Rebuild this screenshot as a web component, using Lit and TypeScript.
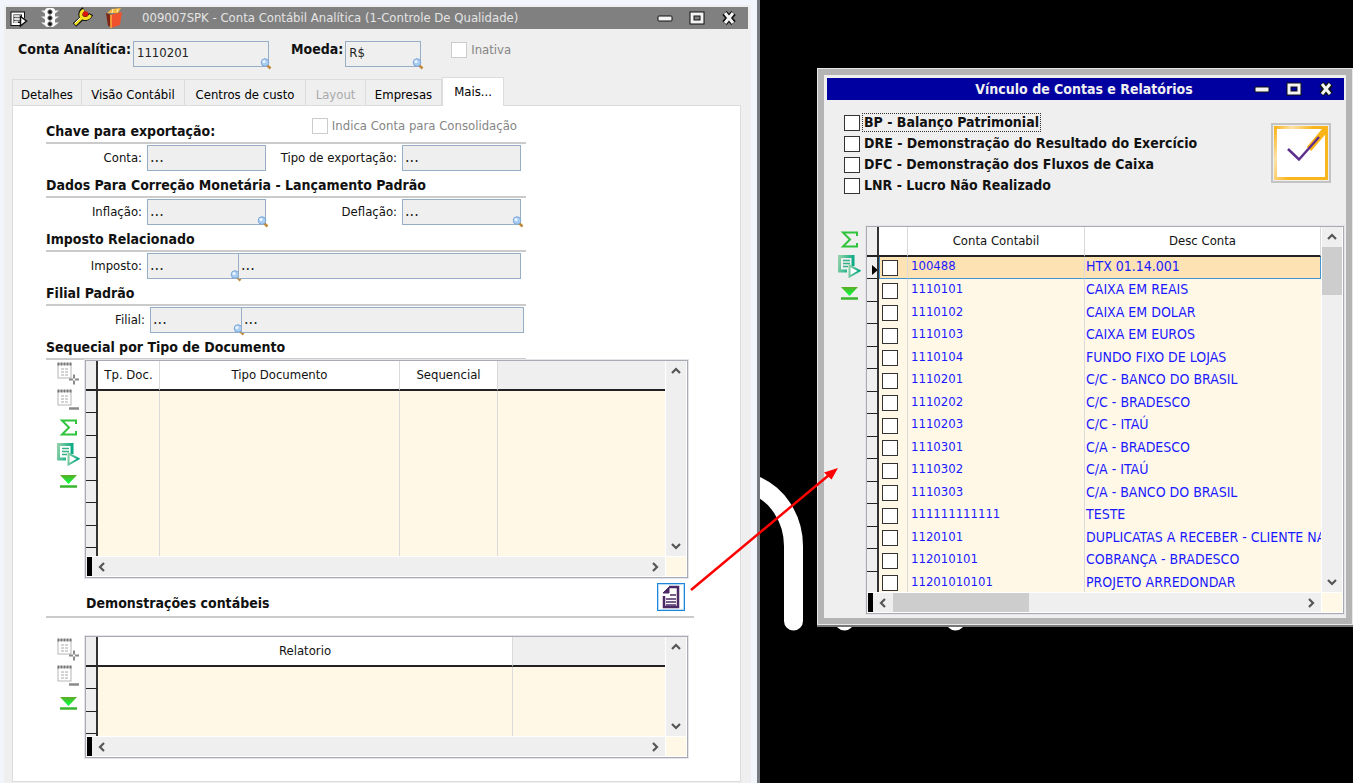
import { LitElement, html, css, svg, nothing } from "lit";
import { customElement, property } from "lit/decorators.js";
import { classMap } from "lit/directives/class-map.js";

const base = css`
  * { box-sizing: border-box; }
  :host { font-family: "DejaVu Sans Condensed", "DejaVu Sans", sans-serif; font-size: 13px; line-height: 16px; color: #111; }
  button { font: inherit; padding: 0; margin: 0; border: 0; background: none; display: grid; place-items: center; }
  svg { display: block; }
  input[type="checkbox"] { appearance: none; width: 16px; height: 16px; margin: 0; flex: none; background: #fff; border: 1px solid #333; display: block; }
  input[type="checkbox"]:checked { background: #0000a0; }
`;

const sheet = svg`
  <rect x="1" y="2" width="13" height="14" fill="#fff" stroke="#b5b5b5"/>
  <path d="M0.500 2h14" stroke="#777" stroke-width="3" stroke-dasharray="2 1"/>
  <path d="M4 7h7M4 10h7M4 13h7" stroke="#a8a8a8" stroke-dasharray="3 1"/>`;

const toolIcons = {
  add: svg`${sheet}<path d="M12 17.500h10M17 12.500v10" stroke="#8a8a8a" stroke-width="2" stroke-dasharray="4 2"/>`,
  remove: svg`${sheet}<path d="M12 19.500h10" stroke="#8a8a8a" stroke-width="2.500"/>`,
  sum: svg`<path d="M19 8V4.500H5L12 11.500L5 18.500H19V15" fill="none" stroke="#2fc43b" stroke-width="2"/>`,
  run: svg`
    <defs><linearGradient id="r" x2="1" y2="0.300"><stop stop-color="#8fd0a8"/><stop offset="1" stop-color="#08ab84"/></linearGradient></defs>
    <path d="M9 16H1.500V1.500H15V11" fill="none" stroke="url(#r)" stroke-width="3"/>
    <path d="M5 5.500h7M5 8.500h7M5 11.500h5" stroke="#35b087" stroke-width="1.500"/>
    <path d="M11.500 10.500V21.500L21.500 15.800Z" fill="#fff" stroke="url(#r)" stroke-width="2"/>`,
  last: svg`
    <defs><linearGradient id="g" x2="0" y2="1"><stop stop-color="#5faa26"/><stop offset="0.800" stop-color="#0cf53a"/></linearGradient></defs>
    <path d="M3 5h17l-8.500 9z" fill="url(#g)"/><path d="M3 16.500h17" stroke="#38b52d" stroke-width="2.500"/>`,
};
type Tool = keyof typeof toolIcons;
const toolNames: Record<Tool, string> = { add: "Incluir", remove: "Excluir", sum: "Somar", run: "Exportar", last: "Último" };

const chevrons = { up: "M2 8l4-4 4 4", down: "M2 4l4 4 4-4", left: "M8 2L4 6l4 4", right: "M4 2l4 4-4 4" };
const chevron = (dir: keyof typeof chevrons, name: string) => html`
  <button class="arrow" aria-label=${name}>
    <svg width="12" height="12" fill="none" stroke="#555" stroke-width="2.200"><path d=${chevrons[dir]}/></svg>
  </button>`;

const lens = html`<svg class="lens" width="12" height="12" viewBox="0 0 12 12">
  <path d="M7 7l3.500 3.500" stroke="#c08a3a" stroke-width="2.500"/>
  <circle cx="5" cy="4.500" r="3.800" fill="#a9cdf3" stroke="#7da7d6"/>
  <circle cx="4" cy="3.500" r="1.500" fill="#eef7ff"/></svg>`;

const windowButtons = html`
  <span class="controls">
    <button aria-label="Minimizar"><svg width="18" height="16"><rect x="2" y="6" width="14" height="5" rx="1" fill="#f4f4f4" stroke="#111"/></svg></button>
    <button aria-label="Maximizar"><svg width="18" height="16"><rect x="4" y="4" width="10" height="8" fill="none" stroke="#111" stroke-width="5"/><rect x="4" y="4" width="10" height="8" fill="none" stroke="#f4f4f4" stroke-width="3"/></svg></button>
    <button aria-label="Fechar"><svg width="18" height="16" fill="none"><path d="M4.500 3L13.500 13M13.500 3L4.500 13" stroke="#111" stroke-width="6"/><path d="M5 3L13 13M13 3L5 13" stroke="#f4f4f4" stroke-width="3"/></svg></button>
  </span>`;

interface Column { title: string; width?: number; blank?: boolean }

@customElement("data-grid")
export class DataGrid extends LitElement {
  @property({ attribute: false }) columns: Column[] = [];
  @property({ attribute: false }) rows: string[][] = [];
  @property({ attribute: false }) tools: Tool[] = [];
  @property({ type: Number }) blankRows = 0;
  @property({ type: Boolean }) selectable = false;
  @property({ type: Boolean }) scrolled = false;

  static styles = [base, css`
    :host { display: flex; }
    .tools { flex: none; width: 28px; display: flex; flex-direction: column; gap: 5px; padding-top: 2px; }
    .tools button { width: 22px; height: 22px; }
    .frame { flex: 1; min-width: 0; display: grid; grid-template-columns: minmax(0, 1fr) 20px; grid-template-rows: minmax(0, 1fr) 19px; gap: 1px; background: #fff; border: 1px solid #a9abb3; outline: 1px solid #e4e4ea; outline-offset: 0; padding-right: 1px; padding-bottom: 1px; }
    .view { overflow: hidden; background: #fff8e7; }
    table { width: 100%; table-layout: fixed; border-collapse: separate; border-spacing: 0; }
    th { height: 30px; padding: 0; font-weight: normal; background: #fff; border-bottom: 2px solid #222; border-right: 1px solid #dadada; white-space: nowrap; text-align: center; }
    th.blank { background: #efefef; border-right: 0; }
    td { height: 22px; padding: 0 0 3px 1px; line-height: 16px; border-right: 1px solid #dadada; white-space: nowrap; overflow: hidden; color: #1a1aff; vertical-align: middle; }
    tr:nth-child(even) td { height: 23px; }
    td:last-child { border-right: 0; font-size: 14px; }
    td.code { padding-left: 3px; }
    th.gutter, td.gutter { background: #efefef; border-right: 2px solid #333; padding: 0; }
    td.gutter { border-bottom: 1px solid #222; }
    td.pick { padding: 0 0 0 3px; }
    tr.current td:not(.gutter) { background: #fde3b4; border-bottom: 1px solid #4394cf; }
    tr.current td:last-child { border-right: 1px solid #4394cf; }
    tr.current .pick { border-left: 1px solid #4394cf; padding-left: 2px; }
    .marker { margin: 4px 0 0 5px; }
    .vbar { background: #efefef; display: flex; flex-direction: column; justify-content: space-between; }
    .hbar { background: #efefef; display: flex; justify-content: space-between; }
    .hbar::before { content: ""; width: 5px; margin-left: 1px; background: #000; flex: none; }
    .arrow { width: 20px; height: 20px; flex: none; }
    .hbar .arrow { height: 19px; }
    .thumb { background: #cdcdcd; }
    .vbar .thumb { height: 48px; margin-bottom: auto; }
    .hbar .thumb { width: 30%; margin-right: auto; }
    .spacer { flex: 1; }
    .corner { background: #fff8e7; }
  `];

  render() {
    return html`
      <div class="tools">
        ${this.tools.map((t) => html`<button aria-label=${toolNames[t]}><svg width="23" height="23" viewBox="0 0 23 23" fill="none">${toolIcons[t]}</svg></button>`)}
      </div>
      <div class="frame">
        <div class="view">
          <table>
            <colgroup>
              <col style="width:12px">
              ${this.selectable ? html`<col style="width:29px">` : nothing}
              ${this.columns.map((c) => html`<col style=${c.width ? `width:${c.width}px` : ""}>`)}
            </colgroup>
            <thead><tr>
              <th class="gutter"></th>
              ${this.selectable ? html`<th></th>` : nothing}
              ${this.columns.map((c) => html`<th class=${classMap({ blank: !!c.blank })}>${c.title}</th>`)}
            </tr></thead>
            <tbody>
              ${this.rows.map((r, i) => html`<tr class=${classMap({ current: i === 0 })}>
                <td class="gutter">${i === 0 ? html`<svg class="marker" width="6" height="10"><path d="M0 0l6 5-6 5z" fill="#000"/></svg>` : nothing}</td>
                ${this.selectable ? html`<td class="pick"><input type="checkbox" aria-label=${r[0]}></td>` : nothing}
                <td class="code">${r[0]}</td><td>${r[1]}</td>
              </tr>`)}
              ${Array.from({ length: this.blankRows }, () => html`<tr><td class="gutter"></td>${this.columns.map(() => html`<td></td>`)}</tr>`)}
            </tbody>
          </table>
        </div>
        <div class="vbar">${chevron("up", "Rolar para cima")}${this.scrolled ? html`<div class="thumb"></div>` : nothing}${chevron("down", "Rolar para baixo")}</div>
        <div class="hbar">${chevron("left", "Rolar para a esquerda")}${this.scrolled ? html`<div class="thumb"></div>` : html`<span class="spacer"></span>`}${chevron("right", "Rolar para a direita")}</div>
        <div class="corner"></div>
      </div>`;
  }
}

const accounts = [
  ["100488", "HTX 01.14.001"], ["1110101", "CAIXA EM REAIS"], ["1110102", "CAIXA EM DOLAR"],
  ["1110103", "CAIXA EM EUROS"], ["1110104", "FUNDO FIXO DE LOJAS"], ["1110201", "C/C - BANCO DO BRASIL"],
  ["1110202", "C/C - BRADESCO"], ["1110203", "C/C - ITAÚ"], ["1110301", "C/A - BRADESCO"],
  ["1110302", "C/A - ITAÚ"], ["1110303", "C/A - BANCO DO BRASIL"], ["111111111111", "TESTE"],
  ["1120101", "DUPLICATAS A RECEBER - CLIENTE NA"], ["112010101", "COBRANÇA - BRADESCO"],
  ["11201010101", "PROJETO ARREDONDAR"],
];
const reports = ["BP - Balanço Patrimonial", "DRE - Demonstração do Resultado do Exercício", "DFC - Demonstração dos Fluxos de Caixa", "LNR - Lucro Não Realizado"];
const tabs = ["Detalhes", "Visão Contábil", "Centros de custo", "Layout", "Empresas", "Mais..."];

const field = (id: string, label: string, value: string, lookup = false) => html`
  ${label ? html`<label for=${id}>${label}</label>` : nothing}
  <span class="box"><input id=${id} type="text" aria-label=${label || "Descrição"} class=${classMap({ empty: value === "..." })} .value=${value}>${lookup ? lens : nothing}</span>`;

@customElement("app-root")
export class AppRoot extends LitElement {
  static styles = [base, css`
    :host { display: block; }
    .desktop { display: grid; grid-template-columns: minmax(0, 760fr) minmax(0, 593fr); min-height: 100vh; background: #000; overflow: hidden; }
    .main { background: #f2f6fc; padding: 5px 6px 0 4px; border-right: 3px solid #777b80; display: flex; }
    .client { flex: 1; min-width: 0; background: #efefef; padding: 2px 3px 1px 2px; display: flex; flex-direction: column; }
    .title { height: 22px; background: #808080; display: flex; align-items: center; color: #e4e4e4; flex: none; }
    .title .caption { flex: 1; padding-left: 17px; white-space: nowrap; overflow: hidden; }
    .main-icons { display: flex; gap: 10px; padding-left: 1px; }
    .main-icons button { width: 22px; height: 22px; }
    .controls { display: flex; gap: 14px; padding-right: 10px; }
    .head { display: flex; height: 50px; padding: 12px 12px 0; align-items: flex-start; flex: none; }
    .head label { font-size: 14px; font-weight: bold; margin-right: 2px; }
    .head .moeda { margin-left: 22px; }
    .check { display: flex; align-items: center; gap: 4px; color: #858585; white-space: nowrap; }
    .head .check { margin: 1px 0 0 30px; }
    .check input { border: 1px solid #ccc; }
    .head .check label { font-size: 13px; font-weight: normal; margin: 0; }
    .box { position: relative; display: block; height: 26px; }
    .box input { width: 100%; height: 100%; font: inherit; color: #222; background: #efefef; border: 1px solid #96aec6; outline: 0; padding: 0 3px 4px; border-radius: 0; display: block; }
    .box input.empty { font-size: 16px; padding-left: 2px; }
    .box + .box { margin-left: -1px; }
    .lens { position: absolute; right: -3px; bottom: -3px; }
    .w-account { width: 136px; }
    .w-coin { width: 76px; }
    .tabs { display: flex; align-items: flex-end; height: 29px; margin: -2px 0 -1px 6px; flex: none; position: relative; }
    .tab { height: 27px; padding: 3px 0 0; border: 1px solid #dcdcdc; border-width: 1px 1px 0 0; white-space: nowrap; flex: none; }
    .tab.first { border-left-width: 1px; }
    .tab:disabled { color: #aaa; }
    .tab.on { height: 29px; padding: 0 0 1px; background: #fff; border-left-width: 1px; }
    .panel { flex: 1; background: #fff; border: 1px solid #dcdcdc; margin: 0 7px 0 6px; padding: 12px 49px 22px 33px; }
    .section { width: 100%; max-width: 480px; }
    h2 { margin: 0; font-size: 14px; line-height: 16px; font-weight: bold; white-space: nowrap; }
    .bar { height: 26px; border-bottom: 2px solid #cbcbcb; display: flex; align-items: flex-start; justify-content: space-between; padding: 5px 9px 0 0; }
    .bar .check { margin-top: -5px; }
    .grid { display: grid; grid-template-columns: 96px 119px 126px 119px; column-gap: 5px; align-items: center; height: 28px; }
    .grid.pair { grid-template-columns: 96px 92px 277px; }
    .grid.pair.shift { grid-template-columns: 99px 92px 277px; }
    .grid.pair .box + .box { margin-left: -6px; }
    .grid label { text-align: right; white-space: nowrap; }
    .seq { margin: 0 3px 0 11px; height: 218px; }
    .rel { margin: 18px 3px 0 11px; height: 122px; }
    .demo { height: 40px; padding: 5px 7px 0 40px; border-bottom: 2px solid #cbcbcb; display: flex; justify-content: space-between; align-items: flex-start; }
    .demo h2 { padding-top: 12px; }
    .demo { margin-right: -3px; padding-right: 9px; }
    .open { width: 28px; height: 28px; border: 1px solid #1c87dd; outline: 1px solid #b9dcf5; outline-offset: -2px; }
    .side { position: relative; padding: 68px 0 157px 57px; }
    .wallpaper { position: absolute; left: 0; top: 460px; }
    .pointer { position: absolute; left: -72px; top: 464px; pointer-events: none; }
    .dialog { position: relative; background: #efefef; border: 7px solid #b4b4b4; outline: 1px solid #e8e8e8; outline-offset: -1px; box-shadow: 0 2px 0 #777; display: flex; flex-direction: column; padding: 3px 2px 4px 3px; }
    .dialog .title { background: #0000a0; color: #f0f0f0; }
    .dialog .caption { text-align: center; font-size: 14px; font-weight: bold; padding-left: 88px; }
    .dialog .controls { padding-right: 9px; }
    .options { display: flex; justify-content: space-between; align-items: flex-start; padding: 12px 13px 0 17px; height: 126px; }
    .opt { display: flex; align-items: center; height: 21px; gap: 3px; font-size: 14px; font-weight: bold; white-space: nowrap; }
    .opt label { padding: 0 1px 1px; }
    .opt.focus label { outline: 1px dotted #333; }
    .list { display: flex; flex-direction: column; align-items: flex-start; }
    .confirm { width: 60px; height: 60px; border: 2px solid #c3c3c3; margin-top: 11px; flex: none; }
    .accounts { height: 388px; margin-left: 11px; }
  `];

  render() {
    return html`
    <div class="desktop">
      <main class="main"><div class="client">
        <header class="title">
          <div class="main-icons">
            <button aria-label="Executar"><svg width="20" height="20" fill="none"><path d="M12 16H4.500V5.500H15V10" fill="#777" stroke="#111" stroke-width="4"/><path d="M12 16H4.500V5.500H15V10" stroke="#fff" stroke-width="2"/><path d="M6 8h7M6 11h6M6 14h4" stroke="#fff" stroke-width="1.500"/><path d="M12.500 8.500v9.500l6-5z" fill="#fff" stroke="#111" stroke-width="1.500"/></svg></button>
            <button aria-label="Semáforo"><svg width="22" height="22"><path d="M2 3.500h18l-4 3H6zM2 9.500h18l-4 3H6zM2 15.500h18l-4 3H6z" fill="#f2f2f2"/><rect x="6" y="1" width="10" height="19" rx="3" fill="#fff"/><g fill="#111" stroke="#777"><circle cx="11" cy="5" r="2.200"/><circle cx="11" cy="11" r="2.200"/><circle cx="11" cy="17" r="2.200"/></g></svg></button>
            <button aria-label="Ferramentas"><svg width="22" height="22" fill="none"><path d="M3.500 18L11 11M13 2.500c-4 2-4 7-1 8.500s6 0 8-4" stroke="#111" stroke-width="5"/><path d="M4 17.500L11 10.500M13 3c-4 2-4 7-1 8s6 0 7.500-3" stroke="#f7df22" stroke-width="3"/><circle cx="14.500" cy="7" r="2.800" fill="#d9160c"/><path d="M4 16l5-5" stroke="#fff"/></svg></button>
            <button aria-label="Arquivos"><svg width="22" height="22"><path d="M4 6l5-4 9-1-3 5z" fill="#f6b73b"/><path d="M3 6l5 2v12l-3-1z" fill="#7c2513"/><path d="M7 8l12-3-2 13-9 3z" fill="#f0522d"/><path d="M8 8v13" stroke="#ffb03a" stroke-width="1.500"/><path d="M9 6l1-4M14 5l1-3" stroke="#fff4c2"/></svg></button>
          </div>
          <span class="caption">009007SPK - Conta Contábil Analítica (1-Controle De Qualidade)</span>
          ${windowButtons}
        </header>
        <div class="head">
          <label for="conta">Conta Analítica:</label>
          <span class="box w-account"><input id="conta" type="text" .value=${"1110201"}>${lens}</span>
          <label class="moeda" for="moeda">Moeda:</label>
          <span class="box w-coin"><input id="moeda" type="text" .value=${"R$"}>${lens}</span>
          <span class="check"><input id="inativa" type="checkbox" disabled><label for="inativa">Inativa</label></span>
        </div>
        <nav class="tabs" role="tablist">
          ${tabs.map((t, i) => html`<button role="tab" class=${classMap({ tab: true, first: i === 0, on: i === 5 })} style="width:${[70, 103, 121, 60, 76, 62][i]}px" ?disabled=${i === 3} aria-selected=${i === 5}>${t}</button>`)}
        </nav>
        <section class="panel">
          <div class="section">
            <div class="bar"><h2>Chave para exportação:</h2><span class="check"><input id="consol" type="checkbox" disabled><label for="consol">Indica Conta para Consolidação</label></span></div>
            <div class="grid">${field("c1", "Conta:", "...")}${field("c2", "Tipo de exportação:", "...")}</div>
            <div class="bar"><h2>Dados Para Correção Monetária - Lançamento Padrão</h2></div>
            <div class="grid">${field("c3", "Inflação:", "...", true)}${field("c4", "Deflação:", "...", true)}</div>
            <div class="bar"><h2>Imposto Relacionado</h2></div>
            <div class="grid pair">${field("c5", "Imposto:", "...", true)}${field("c6", "", "...")}</div>
            <div class="bar"><h2>Filial Padrão</h2></div>
            <div class="grid pair shift">${field("c7", "Filial:", "...", true)}${field("c8", "", "...")}</div>
            <div class="bar"><h2>Sequecial por Tipo de Documento</h2></div>
          </div>
          <data-grid class="seq" .tools=${["add", "remove", "sum", "run", "last"]} .blankRows=${8}
            .columns=${[{ title: "Tp. Doc.", width: 62 }, { title: "Tipo Documento", width: 240 }, { title: "Sequencial", width: 98 }, { title: "", blank: true }]}></data-grid>
          <div class="demo"><h2>Demonstrações contábeis</h2>
            <button class="open" aria-label="Abrir vínculo de contas e relatórios"><svg width="20" height="24" fill="none" stroke="#4b2a66"><path d="M3 11V22H17V2H8" stroke-width="2.500"/><path d="M2 8h6V2z" fill="#4b2a66"/><path d="M9 10h6M5 14h10M5 17h10M5 20h10" stroke-width="1.500"/></svg></button>
          </div>
          <data-grid class="rel" .tools=${["add", "remove", "last"]} .blankRows=${4}
            .columns=${[{ title: "Relatorio", width: 415 }, { title: "", blank: true }]}></data-grid>
        </section>
      </div></main>
      <aside class="side">
        <svg class="wallpaper" width="220" height="180" fill="none" stroke="#fff" stroke-width="19" stroke-linecap="round"><path d="M-12 23C18 31 33.500 60 33.500 86V161M84.500 120V161M195.500 120V161"/></svg>
        <div class="dialog" role="dialog" aria-label="Vínculo de Contas e Relatórios">
          <header class="title"><span class="caption">Vínculo de Contas e Relatórios</span>${windowButtons}</header>
          <div class="options">
            <div class="list">
              ${reports.map((r, i) => html`<span class=${classMap({ opt: true, focus: i === 0 })}><input id="r${i}" type="checkbox"><label for="r${i}">${r}</label></span>`)}
            </div>
            <button class="confirm" aria-label="Confirmar"><svg width="56" height="56" fill="none"><defs><linearGradient id="f" x2="1" y2="0.500"><stop stop-color="#f9b51c"/><stop offset="0.250" stop-color="#fde3a8"/><stop offset="0.600" stop-color="#f9b51c"/></linearGradient></defs><rect x="2.500" y="2.500" width="51" height="51" fill="#fff" stroke="url(#f)" stroke-width="3"/><path d="M36 24L53 4" stroke="#fbb416" stroke-width="6"/><path d="M15 24L26 34.500L46 12" stroke="#5d2e8c" stroke-width="2.500"/></svg></button>
          </div>
          <data-grid class="accounts" selectable scrolled .tools=${["sum", "run", "last"]} .rows=${accounts}
            .columns=${[{ title: "Conta Contabil", width: 177 }, { title: "Desc Conta" }]}></data-grid>
        </div>
        <svg class="pointer" width="156" height="132"><path d="M3 126L141 11" stroke="#f00" stroke-width="2.500"/><path d="M150 4L143.500 15.500L136 8.500Z" fill="#f00"/></svg>
      </aside>
    </div>`;
  }
}
